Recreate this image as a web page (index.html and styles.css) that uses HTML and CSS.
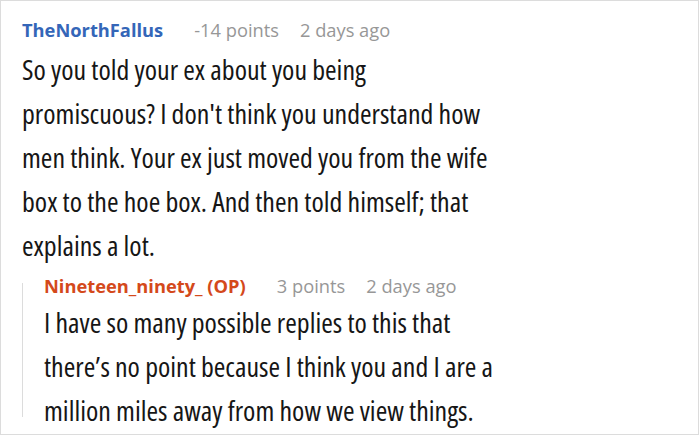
FILE: index.html
```html
<!DOCTYPE html>
<html>
<head>
<meta charset="utf-8">
<link rel="stylesheet" href="styles.css">
</head>
<body>
<div class="frame">
  <div class="comment">
    <div class="meta">
      <span class="user user-blue">TheNorthFallus</span>
      <span class="points">-14 points</span>
      <span class="time">2 days ago</span>
    </div>
    <div class="text">So you told your ex about you being promiscuous? I don't think you understand how men think. Your ex just moved you from the wife box to the hoe box. And then told himself; that explains a lot.</div>
  </div>
  <div class="reply">
    <div class="reply-line"></div>
    <div class="reply-body">
      <div class="meta meta-reply">
        <span class="user user-orange">Nineteen_ninety_ (OP)</span>
        <span class="points">3 points</span>
        <span class="time">2 days ago</span>
      </div>
      <div class="text text-reply">I have so many possible replies to this that there’s no point because I think you and I are a million miles away from how we view things.</div>
    </div>
  </div>
</div>
</body>
</html>
```
FILE: styles.css
```css
html, body {
  margin: 0;
  padding: 0;
  background: #fff;
}
.frame {
  box-sizing: border-box;
  width: 699px;
  height: 435px;
  border: 1px solid #dcdcdc;
  overflow: hidden;
  padding: 17px 21px 0 21px;
  font-family: "Open Sans", "Noto Sans", sans-serif;
}
.meta {
  display: flex;
  font-size: 18.3px;
  line-height: 24px;
  height: 24px;
  white-space: nowrap;
}
.user {
  font-weight: 700;
  margin-right: 31px;
}
.user-blue { color: #3466b8; }
.user-orange { color: #d4491b; }
.points {
  color: #979797;
  margin-right: 21px;
}
.time {
  color: #979797;
}
.text {
  margin-top: 5px;
  font-size: 28px;
  font-stretch: semi-condensed;
  line-height: 44px;
  color: #161616;
  width: 476px;
}
.reply {
  display: flex;
  margin-top: 7px;
}
.reply-line {
  width: 1px;
  background: #dcdcdc;
  margin: 9px 21px 15px 0;
  flex: none;
}
.reply-body {
  flex: 1;
}
.text-reply {
  margin-top: 2px;
  width: 462px;
}
```
